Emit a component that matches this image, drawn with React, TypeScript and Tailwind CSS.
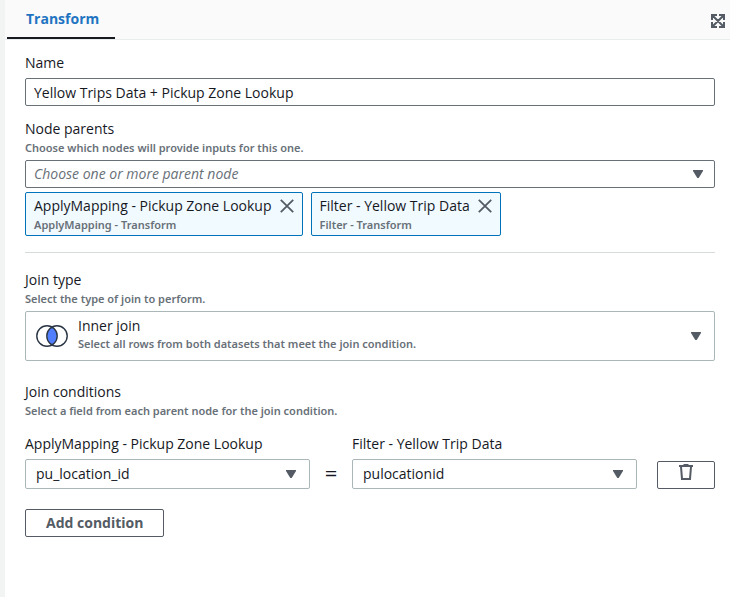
import type { ReactNode } from "react";

const hintClass = "font-['Noto_Sans','Open_Sans',sans-serif] text-[11px] leading-4 font-semibold text-[#687078]";
const labelClass = "block text-[14px] leading-[22px] text-[#16191f]";

function Caret() {
  return (
    <svg
      className="pointer-events-none h-2 w-[10px] fill-[#545b64]"
      viewBox="0 0 10 8"
      aria-hidden="true"
    >
      <path d="M0 0H10V1L5.700 8H4.300L0 1Z" />
    </svg>
  );
}

function ExpandIcon() {
  return (
    <svg className="h-[14px] w-[14px]" viewBox="0 0 14 14" fill="none" stroke="#545b64" strokeWidth="2" aria-hidden="true">
      <path d="M1 6V1H6M8 1H13V6M13 8V13H8M6 13H1V8M1.500 1.500L12.500 12.500M12.500 1.500L1.500 12.500" />
    </svg>
  );
}

function CloseIcon() {
  return (
    <svg className="h-[14px] w-[14px]" viewBox="0 0 14 14" fill="none" stroke="#545b64" strokeWidth="1.800" aria-hidden="true">
      <path d="M0.800 0.800L13.200 13.200M13.200 0.800L0.800 13.200" />
    </svg>
  );
}

function TrashIcon() {
  return (
    <svg className="h-4 w-[14px]" viewBox="0 0 14 16" fill="none" stroke="#545b64" strokeWidth="2" aria-hidden="true">
      <path d="M0 2H14M4.500 1H9.500" />
      <path d="M2 2.500L3 15H11L12 2.500" />
    </svg>
  );
}

function InnerJoinIcon() {
  return (
    <svg className="h-[22px] w-8" viewBox="0 0 32 22" fill="none" aria-hidden="true">
      <path d="M16 2.200A10.300 10.300 0 0 1 16 19.800A10.300 10.300 0 0 1 16 2.200Z" fill="#527fff" />
      <circle cx="11" cy="11" r="10.200" stroke="#2a3544" strokeWidth="1.400" />
      <circle cx="21" cy="11" r="10.200" stroke="#2a3544" strokeWidth="1.400" />
    </svg>
  );
}

function Token({ title, type }: { title: string; type: string }) {
  return (
    <li className="h-11 rounded-[2px] border border-[#0073bb] bg-[#f1faff] px-2 pt-[3px]">
      <div className="flex items-center gap-2">
        <span className="text-[14px] leading-5 text-[#16191f]">{title}</span>
        <button type="button" aria-label={`Remove ${title}`}>
          <CloseIcon />
        </button>
      </div>
      <p className={`${hintClass} pt-px`}>{type}</p>
    </li>
  );
}

function FieldSelect({ id, label, value }: { id: string; label: string; value: string }) {
  return (
    <div className="min-w-0 flex-1">
      <label htmlFor={id} className={labelClass}>
        {label}
      </label>
      <div className="relative mt-1">
        <select
          id={id}
          className="block h-[30px] w-full appearance-none rounded-[2px] border border-[#aab7b8] bg-white pr-8 pb-px pl-[10px] text-[14px] text-[#16191f]"
        >
          <option>{value}</option>
        </select>
        <span className="pointer-events-none absolute inset-y-0 right-[14px] flex items-center">
          <Caret />
        </span>
      </div>
    </div>
  );
}

function Heading({ children, hint, htmlFor }: { children: ReactNode; hint: string; htmlFor?: string }) {
  return (
    <>
      {htmlFor ? (
        <label htmlFor={htmlFor} className={labelClass}>
          {children}
        </label>
      ) : (
        <h2 className={labelClass}>{children}</h2>
      )}
      <p className={hintClass}>{hint}</p>
    </>
  );
}

export default function App() {
  return (
    <div className="min-h-screen border-l-[5px] border-[#f2f3f3] bg-white font-['Open_Sans','Noto_Sans',sans-serif]">
      <header className="flex h-10 items-center justify-between border-b border-[#eaeded] bg-[#fafafa] pr-[5px] pl-[2px]">
        <div role="tablist" className="flex">
          <button
            type="button"
            role="tab"
            aria-selected="true"
            className="h-[39px] border-b-2 border-[#16191f] pr-4 pl-[19px] text-[14px] font-bold text-[#1f74c1]"
          >
            Transform
          </button>
        </div>
        <button type="button" aria-label="Expand panel" className="pt-[2px]">
          <ExpandIcon />
        </button>
      </header>

      <main className="pt-3 pr-[15px] pl-5">
        <label htmlFor="name" className={labelClass}>
          Name
        </label>
        <input
          id="name"
          type="text"
          defaultValue="Yellow Trips Data + Pickup Zone Lookup"
          className="mt-1 block h-7 w-full rounded-[2px] border border-[#687078] bg-white px-2 text-[14px] text-[#16191f]"
        />

        <section className="mt-3">
          <Heading htmlFor="parents" hint="Choose which nodes will provide inputs for this one.">
            Node parents
          </Heading>
          <div className="relative mt-1">
            <select
              id="parents"
              className="block h-7 w-full appearance-none rounded-[2px] border border-[#687078] bg-white pr-8 pb-px pl-2 text-[14px] text-[#687078] italic"
            >
              <option>Choose one or more parent node</option>
            </select>
            <span className="pointer-events-none absolute inset-y-0 right-3 flex items-center">
              <Caret />
            </span>
          </div>
          <ul className="mt-1 flex flex-wrap gap-2">
            <Token title="ApplyMapping - Pickup Zone Lookup" type="ApplyMapping - Transform" />
            <Token title="Filter - Yellow Trip Data" type="Filter - Transform" />
          </ul>
        </section>

        <hr className="my-4 border-[#d5dbdb]" />

        <section>
          <Heading htmlFor="join-type" hint="Select the type of join to perform.">
            Join type
          </Heading>
          <div className="relative mt-1">
            <select
              id="join-type"
              aria-describedby="join-type-description"
              className="block h-[50px] w-full appearance-none rounded-[2px] border border-[#aab7b8] bg-white pr-8 pb-[21px] pl-[52px] text-[14px] text-[#16191f]"
            >
              <option>Inner join</option>
            </select>
            <div className="pointer-events-none absolute inset-0 flex items-center pr-[14px] pl-[11px]">
              <InnerJoinIcon />
              <p id="join-type-description" className={`${hintClass} ml-[10px] flex-1 pt-4`}>
                Select all rows from both datasets that meet the join condition.
              </p>
              <Caret />
            </div>
          </div>
        </section>

        <section className="mt-5">
          <Heading hint="Select a field from each parent node for the join condition.">Join conditions</Heading>
          <div className="mt-[14px] flex items-end">
            <FieldSelect id="left-field" label="ApplyMapping - Pickup Zone Lookup" value="pu_location_id" />
            <span className="w-[42px] pb-[2px] text-center text-[22px] leading-[30px] text-[#16191f]">=</span>
            <FieldSelect id="right-field" label="Filter - Yellow Trip Data" value="pulocationid" />
            <button
              type="button"
              aria-label="Remove condition"
              className="ml-5 flex h-7 w-[58px] justify-center rounded-[2px] border border-[#545b64] bg-white pt-[2px]"
            >
              <TrashIcon />
            </button>
          </div>
          <button
            type="button"
            className="mt-5 h-7 rounded-[2px] border border-[#545b64] bg-white px-5 pb-px text-[14px] font-bold text-[#545b64]"
          >
            Add condition
          </button>
        </section>
      </main>
    </div>
  );
}
